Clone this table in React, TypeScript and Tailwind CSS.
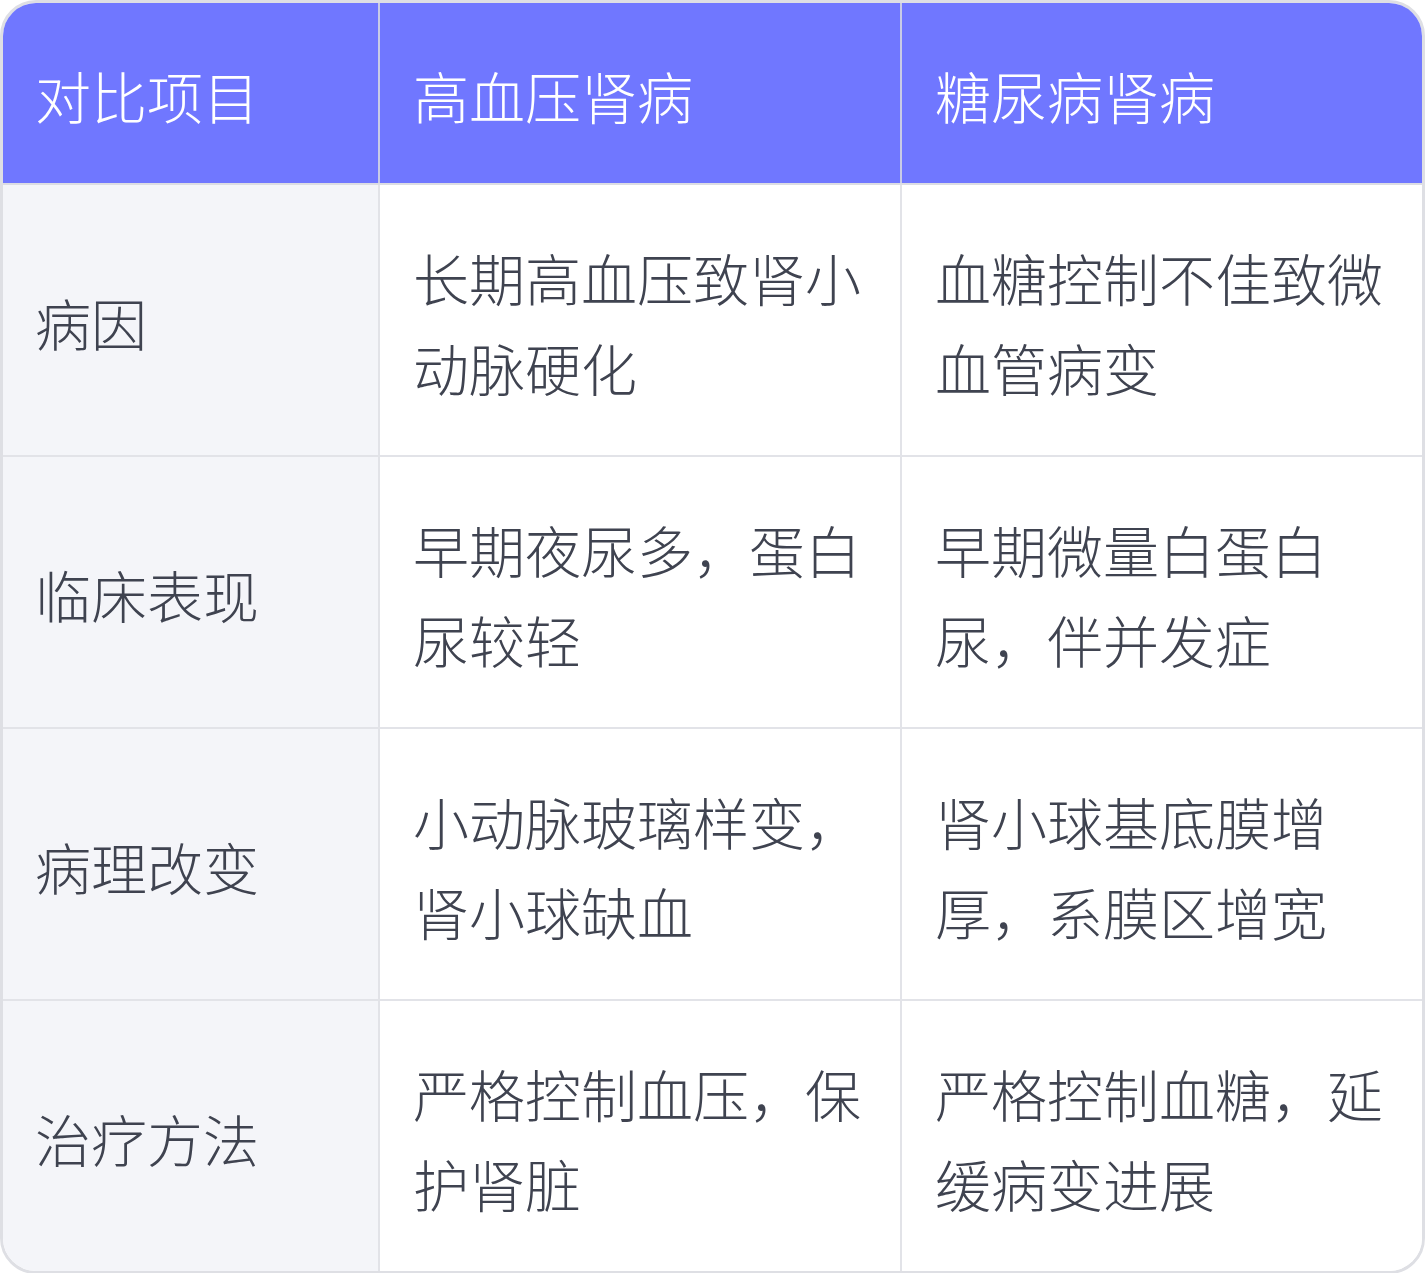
import React from 'react';

const headers = ['对比项目', '高血压肾病', '糖尿病肾病'];

const rows = [
  ['病因', '长期高血压致肾小动脉硬化', '血糖控制不佳致微血管病变'],
  ['临床表现', '早期夜尿多，蛋白尿较轻', '早期微量白蛋白尿，伴并发症'],
  ['病理改变', '小动脉玻璃样变，肾小球缺血', '肾小球基底膜增厚，系膜区增宽'],
  ['治疗方法', '严格控制血压，保护肾脏', '严格控制血糖，延缓病变进展'],
];

export default function App() {
  return (
    <div
      className="w-[1425px] h-[1273px] bg-white"
      style={{ fontFamily: '"Noto Sans CJK SC", "Noto Sans", sans-serif' }}
    >
      <div className="border-[3px] border-[#dedfe4] rounded-[36px] overflow-hidden">
        {/* Header */}
        <div className="grid grid-cols-[377px_522px_1fr] bg-[#7077ff] border-b-2 border-[#dcdde3]">
          {headers.map((h, i) => (
            <div
              key={h}
              className={`h-[180px] flex items-center pt-[4px] pr-[32px] text-[56px] leading-[1.6] text-white font-light ${
                i < 2 ? 'border-r-2 border-[#c9cbe6]' : ''
              } ${i > 0 ? 'pl-[33px]' : 'pl-[32px]'}`}
            >
              {h}
            </div>
          ))}
        </div>

        {/* Body rows */}
        {rows.map((row, r) => (
          <div
            key={row[0]}
            className={`grid grid-cols-[377px_522px_1fr] ${r < rows.length - 1 ? 'border-b-2 border-[#e2e3e8]' : ''}`}
          >
            {row.map((cell, i) => (
              <div
                key={i}
                className={`h-[270px] flex items-center pt-[4px] pr-[32px] text-[56px] leading-[1.6] text-[#3f4350] font-light ${
                  i === 0 ? 'bg-[#f4f5f9]' : 'bg-white'
                } ${i < 2 ? 'border-r-2 border-[#e2e3e8]' : ''} ${i > 0 ? 'pl-[33px]' : 'pl-[32px]'}`}
              >
                <span>{cell}</span>
              </div>
            ))}
          </div>
        ))}
      </div>
    </div>
  );
}
